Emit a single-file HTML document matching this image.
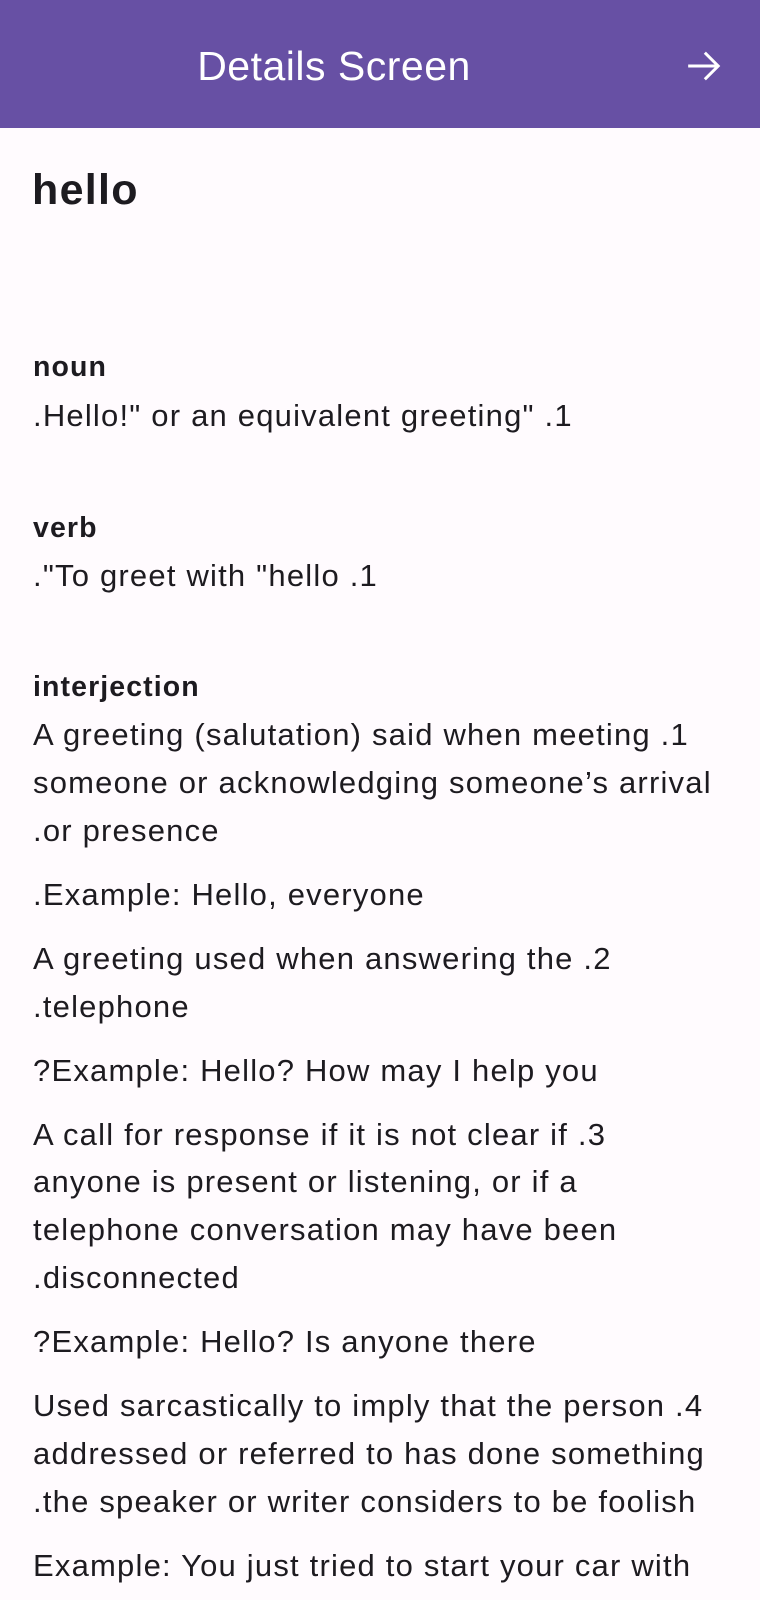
<!DOCTYPE html>
<html><head><meta charset="utf-8"><style>
html,body{margin:0;padding:0;}
body{width:760px;height:1600px;background:#fffbfe;position:relative;overflow:hidden;font-family:"Liberation Sans",sans-serif;color:#1d1b20;}
.hdr{position:absolute;left:0;top:0;width:760px;height:128px;background:#6750a4;}
.t{position:absolute;white-space:nowrap;line-height:1;}
.b{font-size:31px;left:33px;letter-spacing:1.2px;}
.l{font-size:28.5px;font-weight:bold;left:33px;letter-spacing:1.1px;}
</style></head><body>
<div class="hdr"></div>
<div class="t" style="font-size:41px;color:#fff;left:0;width:668px;text-align:center;top:46px;letter-spacing:0.5px;">Details Screen</div>
<svg style="position:absolute;left:684px;top:46px" width="40" height="40" viewBox="0 0 24 24"><path d="M2.5 12h18M12.5 4l8 8-8 8" stroke="#fff" stroke-width="1.8" fill="none"/></svg>
<div class="t" style="font-size:43px;font-weight:bold;left:32px;top:169px;letter-spacing:1.3px;">hello</div>

<div class="t l" style="top:353px">noun</div>
<div class="t b" style="top:400px">.Hello!" or an equivalent greeting" .1</div>
<div class="t l" style="top:514px">verb</div>
<div class="t b" style="top:560px">."To greet with "hello .1</div>
<div class="t l" style="top:673px">interjection</div>
<div class="t b" style="top:719px">A greeting (salutation) said when meeting .1</div>
<div class="t b" style="top:767px">someone or acknowledging someone’s arrival</div>
<div class="t b" style="top:815px">.or presence</div>
<div class="t b" style="top:879px">.Example: Hello, everyone</div>
<div class="t b" style="top:943px">A greeting used when answering the .2</div>
<div class="t b" style="top:991px">.telephone</div>
<div class="t b" style="top:1055px">?Example: Hello? How may I help you</div>
<div class="t b" style="top:1119px">A call for response if it is not clear if .3</div>
<div class="t b" style="top:1166px">anyone is present or listening, or if a</div>
<div class="t b" style="top:1214px">telephone conversation may have been</div>
<div class="t b" style="top:1262px">.disconnected</div>
<div class="t b" style="top:1326px">?Example: Hello? Is anyone there</div>
<div class="t b" style="top:1390px">Used sarcastically to imply that the person .4</div>
<div class="t b" style="top:1438px">addressed or referred to has done something</div>
<div class="t b" style="top:1486px">.the speaker or writer considers to be foolish</div>
<div class="t b" style="top:1550px">Example: You just tried to start your car with</div>
</body></html>
